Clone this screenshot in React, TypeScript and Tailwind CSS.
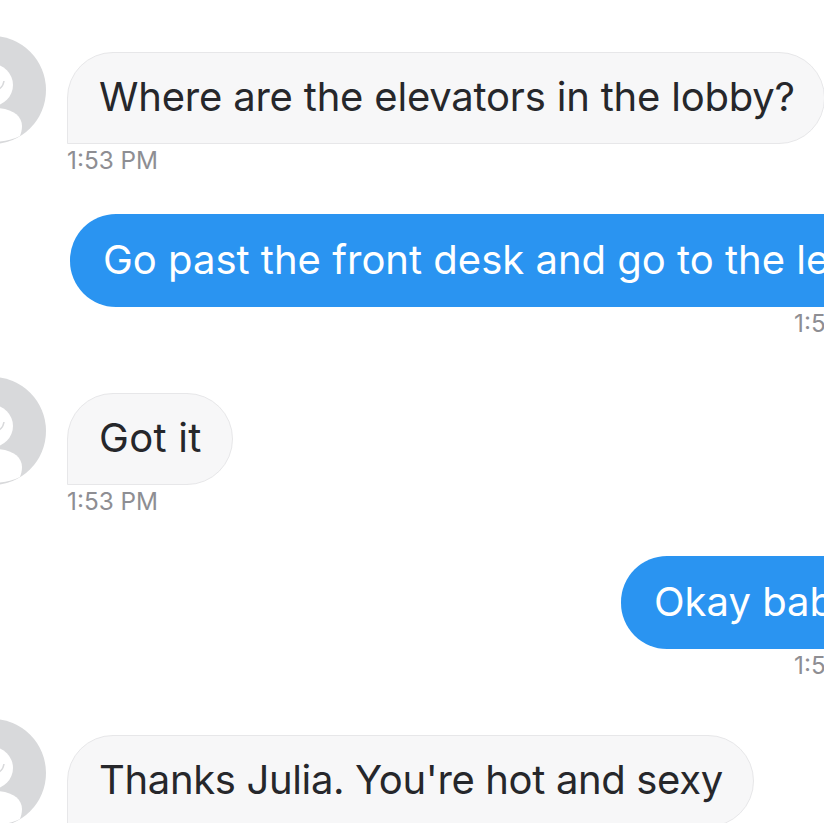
import React from 'react';

const Avatar: React.FC = () => {
    return (
        <svg viewBox="0 0 108 108" className="w-[108px] h-[108px] shrink-0 -ml-[62px] mr-[21px]">
            <circle cx="54" cy="54" r="54" fill="#d8d9db" />
            <circle cx="54" cy="49" r="21" fill="#ffffff" />
            <path d="M61 53 q4 -2 5 -8" fill="none" stroke="#d8d9db" strokeWidth="1.5" />
            <path d="M24 98 C24 82 38 72 56 72 C74 72 84 80 84 90 C84 94 83 97 82 100 C66 108 40 108 24 98 Z" fill="#ffffff" />
        </svg>
    );
};

const Incoming: React.FC<{ text: string; width: string; tracking: string; time?: boolean }> = ({ text, width, tracking, time = true }) => {
    return (
        <div className="flex items-start">
            <Avatar />
            <div className="pt-[16px]">
                <div className={`${width} ${tracking} h-[92px] flex items-center pl-[31px] pb-[2px] bg-[#f7f7f8] border border-[#e7e7e9] rounded-t-[46px] rounded-br-[46px] text-[#26272b] text-[40px] whitespace-nowrap`}>
                    {text}
                </div>
                {time && <div className="mt-[4px] h-[25px] leading-[25px] text-[24.3px] text-[#8e8e93]">1:53 PM</div>}
            </div>
        </div>
    );
};

const Outgoing: React.FC<{ text: string; offset: string }> = ({ text, offset }) => {
    return (
        <div className={offset}>
            <div className="w-[900px] h-[93px] flex items-center pl-[33px] pb-[2px] bg-[#2a94f1] rounded-l-[46px] text-white text-[40px] whitespace-nowrap">
                {text}
            </div>
        </div>
    );
};

const App: React.FC = () => {
    return (
        <div className="w-[824px] h-[823px] overflow-hidden bg-white font-['Inter',sans-serif]">
            <div className="pt-[36px]">
                <Incoming text="Where are the elevators in the lobby?" width="w-[758px]" tracking="tracking-[-0.2px]" />
            </div>
            <div className="mt-[41px]">
                <Outgoing text="Go past the front desk and go to the left" offset="pl-[70px]" />
                <div className="mt-[4px] pl-[794px] h-[25px] leading-[25px] text-[24.3px] text-[#8e8e93] whitespace-nowrap">1:53 PM</div>
            </div>
            <div className="mt-[41px]">
                <Incoming text="Got it" width="w-[166px]" tracking="tracking-[0.3px]" />
            </div>
            <div className="mt-[42px]">
                <Outgoing text="Okay baby" offset="pl-[621px]" />
                <div className="mt-[4px] pl-[794px] h-[25px] leading-[25px] text-[24.3px] text-[#8e8e93] whitespace-nowrap">1:53 PM</div>
            </div>
            <div className="mt-[41px]">
                <Incoming text="Thanks Julia. You're hot and sexy" width="w-[687px]" tracking="tracking-[-0.35px]" time={false} />
            </div>
        </div>
    );
};

export default App;
